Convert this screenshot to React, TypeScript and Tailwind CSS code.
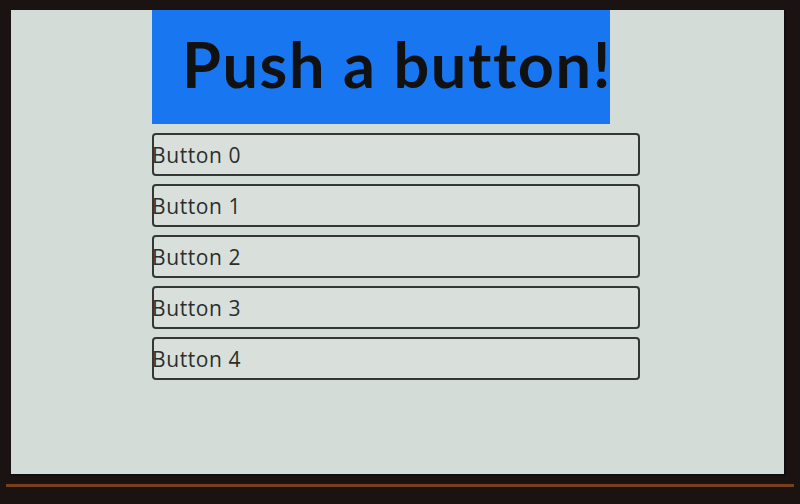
const buttons = ["Button 0", "Button 1", "Button 2", "Button 3", "Button 4"];

export default function App() {
  return (
    <div className="w-[800px] h-[504px] bg-[#1b1212] flex flex-col overflow-hidden">
      <div className="pt-[10px] pl-[11px] pr-[14px]">
        <div className="h-[466px] bg-[#d4dcd7] flex flex-col pl-[141px] border-r-2 border-b-2 border-[#0d0d14]">
          <div
            className="w-[458px] h-[114px] bg-[#1877f0] flex items-center"
            style={{ fontFamily: "Lato, 'Open Sans', sans-serif" }}
          >
            <h1 className="text-[63px] font-bold text-[#111] tracking-[1.6px] pl-[30px] pb-[6px] whitespace-nowrap">
              Push a button!
            </h1>
          </div>
          <div
            className="flex flex-col gap-[8px] mt-[9px]"
            style={{ fontFamily: "'Open Sans', Lato, sans-serif" }}
          >
            {buttons.map((b) => (
              <button
                key={b}
                className="w-[488px] h-[43px] border-2 border-[#333836] rounded-[4px] bg-[#d9e0dc] text-left flex items-center text-[21px] text-[#2a2e2c] tracking-[0.6px] leading-none"
              >
                <span className="-ml-[2px] pt-[2px]">{b}</span>
              </button>
            ))}
          </div>
        </div>
      </div>
      <div className="mt-[8px] h-[3px] bg-[#7a3f1c] mx-[6px]" />
    </div>
  );
}
